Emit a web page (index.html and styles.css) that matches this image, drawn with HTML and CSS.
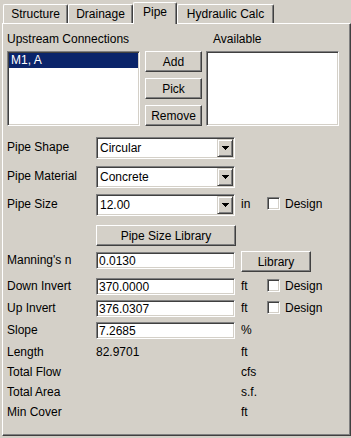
FILE: index.html
```html
<!DOCTYPE html>
<html>
<head>
    <title>Pipe</title>
    <link rel="stylesheet" href="styles.css">
</head>
<body>
    <div class="tabs">
        <div class="tab tab-structure">Structure</div>
        <div class="tab tab-drainage">Drainage</div>
        <div class="tab tab-pipe active">Pipe</div>
        <div class="tab tab-hydraulic">Hydraulic Calc</div>
    </div>
    <div class="panel">
        <div class="conn-head">
            <span class="head-left">Upstream Connections</span>
            <span>Available</span>
        </div>
        <div class="conn">
            <div class="listbox">
                <div class="item selected">M1, A</div>
            </div>
            <div class="btn-stack">
                <button class="btn">Add</button>
                <button class="btn">Pick</button>
                <button class="btn">Remove</button>
            </div>
            <div class="listbox"></div>
        </div>

        <div class="row row-select row-shape">
            <span class="label">Pipe Shape</span>
            <div class="combo">
                <span class="combo-text">Circular</span>
                <span class="combo-btn"><svg width="7" height="4" viewBox="0 0 7 4" shape-rendering="crispEdges"><path d="M0 0h7v1h-1v1h-1v1h-1v1h-1v-1h-1v-1h-1v-1h-1z" fill="#000"/></svg></span>
            </div>
        </div>
        <div class="row row-select row-material">
            <span class="label">Pipe Material</span>
            <div class="combo">
                <span class="combo-text">Concrete</span>
                <span class="combo-btn"><svg width="7" height="4" viewBox="0 0 7 4" shape-rendering="crispEdges"><path d="M0 0h7v1h-1v1h-1v1h-1v1h-1v-1h-1v-1h-1v-1h-1z" fill="#000"/></svg></span>
            </div>
        </div>
        <div class="row row-select row-size">
            <span class="label">Pipe Size</span>
            <div class="combo">
                <span class="combo-text">12.00</span>
                <span class="combo-btn"><svg width="7" height="4" viewBox="0 0 7 4" shape-rendering="crispEdges"><path d="M0 0h7v1h-1v1h-1v1h-1v1h-1v-1h-1v-1h-1v-1h-1z" fill="#000"/></svg></span>
            </div>
            <span class="unit">in</span>
            <span class="check"></span>
            <span class="check-label">Design</span>
        </div>
        <div class="row row-lib">
            <button class="btn btn-wide">Pipe Size Library</button>
        </div>
        <div class="row row-manning">
            <span class="label">Manning's n</span>
            <div class="edit">0.0130</div>
            <button class="btn btn-lib">Library</button>
        </div>
        <div class="row row-edit row-down">
            <span class="label">Down Invert</span>
            <div class="edit">370.0000</div>
            <span class="unit">ft</span>
            <span class="check"></span>
            <span class="check-label">Design</span>
        </div>
        <div class="row row-edit">
            <span class="label">Up Invert</span>
            <div class="edit">376.0307</div>
            <span class="unit">ft</span>
            <span class="check"></span>
            <span class="check-label">Design</span>
        </div>
        <div class="row row-edit">
            <span class="label">Slope</span>
            <div class="edit">7.2685</div>
            <span class="unit">%</span>
        </div>

        <div class="results">
            <div class="result"><span class="label">Length</span><span class="value">82.9701</span><span>ft</span></div>
            <div class="result"><span class="label">Total Flow</span><span class="value"></span><span>cfs</span></div>
            <div class="result"><span class="label">Total Area</span><span class="value"></span><span>s.f.</span></div>
            <div class="result"><span class="label">Min Cover</span><span class="value"></span><span>ft</span></div>
        </div>
    </div>
</body>
</html>
```

FILE: styles.css
```css
body {
    font-family: "Liberation Sans", Arial, sans-serif;
    font-size: 12px;
    color: #000;
    background-color: #d4d0c8;
    margin: 0;
    width: 351px;
    height: 438px;
    overflow: hidden;
}
.tabs {
    display: flex;
    align-items: flex-end;
    height: 23px;
    margin-left: 3px;
}
.tab {
    box-sizing: border-box;
    height: 19px;
    padding-top: 2px;
    line-height: 14px;
    text-align: center;
    white-space: nowrap;
    border: 1px solid #fff;
    border-right-color: #404040;
    border-bottom: none;
    border-radius: 2px 2px 0 0;
    box-shadow: inset -1px 0 #808080;
}
.tab-structure {
    width: 65px;
}
.tab-drainage {
    width: 65px;
}
.tab-pipe {
    width: 44px;
}
.tab-hydraulic {
    width: 97px;
}
.tab.active {
    height: 22px;
    margin-bottom: -1px;
    background-color: #d4d0c8;
    position: relative;
    z-index: 1;
}
.panel {
    box-sizing: border-box;
    width: 349px;
    height: 413px;
    margin-left: 2px;
    padding: 8px 4px 0 4px;
    border: 1px solid;
    border-color: #fff #404040 #404040 #fff;
    box-shadow: inset -1px -1px #808080;
}
.conn-head {
    display: flex;
    line-height: 14px;
}
.head-left {
    width: 206px;
}
.conn {
    display: flex;
    margin-top: 5px;
}
.listbox, .combo, .edit, .check {
    box-sizing: border-box;
    background-color: #fff;
    border: 1px solid;
    border-color: #808080 #fff #fff #808080;
    box-shadow: inset 1px 1px #404040, inset -1px -1px #d4d0c8;
}
.listbox {
    width: 133px;
    height: 75px;
    padding: 1px;
}
.item {
    height: 15px;
    line-height: 15px;
    padding-left: 2px;
}
.item.selected {
    background-color: #0a246a;
    color: #fff;
}
.btn-stack {
    display: flex;
    flex-direction: column;
    gap: 6px;
    margin: 0 4px 0 5px;
}
.btn {
    box-sizing: border-box;
    width: 57px;
    height: 21px;
    padding: 0;
    font: inherit;
    color: #000;
    background-color: #d4d0c8;
    border: 1px solid;
    border-color: #fff #404040 #404040 #fff;
    box-shadow: inset -1px -1px #808080;
}
.row {
    display: flex;
    align-items: flex-start;
}
.label {
    width: 89px;
    line-height: 14px;
    flex-shrink: 0;
}
.row-select {
    height: 22px;
}
.row-select .label, .row-select .unit, .row-select .check-label {
    padding-top: 3px;
}
.row-select .check {
    margin-top: 3px;
}
.row-shape {
    margin-top: 11px;
}
.row-material {
    margin-top: 7px;
}
.row-size {
    margin-top: 6px;
}
.combo {
    display: flex;
    width: 139px;
    height: 22px;
    padding: 1px;
}
.combo-text {
    flex: 1;
    padding: 1px 0 0 2px;
    line-height: 17px;
}
.combo-btn {
    box-sizing: border-box;
    width: 16px;
    height: 18px;
    display: flex;
    align-items: center;
    justify-content: center;
    background-color: #d4d0c8;
    border: 1px solid;
    border-color: #d4d0c8 #404040 #404040 #d4d0c8;
    box-shadow: inset 1px 1px #fff, inset -1px -1px #808080;
}
.unit {
    width: 26px;
    margin-left: 6px;
    line-height: 14px;
}
.check {
    width: 13px;
    height: 13px;
}
.check-label {
    margin-left: 5px;
    line-height: 14px;
}
.row-lib {
    margin-top: 9px;
    padding-left: 89px;
}
.btn-wide {
    width: 140px;
}
.row-manning {
    height: 21px;
    margin-top: 5px;
}
.row-manning .label {
    padding-top: 2px;
}
.row-manning .edit {
    margin-top: 1px;
}
.btn-lib {
    width: 70px;
    margin-left: 6px;
}
.edit {
    width: 139px;
    height: 17px;
    padding: 1px 2px 0 2px;
    line-height: 15px;
    overflow: hidden;
}
.row-edit {
    height: 17px;
    margin-top: 5px;
}
.row-edit .label, .row-edit .unit, .row-edit .check-label {
    padding-top: 1px;
}
.row-edit .check {
    margin-top: 1px;
}
.row-down {
    margin-top: 6px;
}
.results {
    margin-top: 3px;
}
.result {
    display: flex;
    line-height: 20px;
}
.result .label {
    line-height: 20px;
}
.value {
    width: 145px;
}
```
